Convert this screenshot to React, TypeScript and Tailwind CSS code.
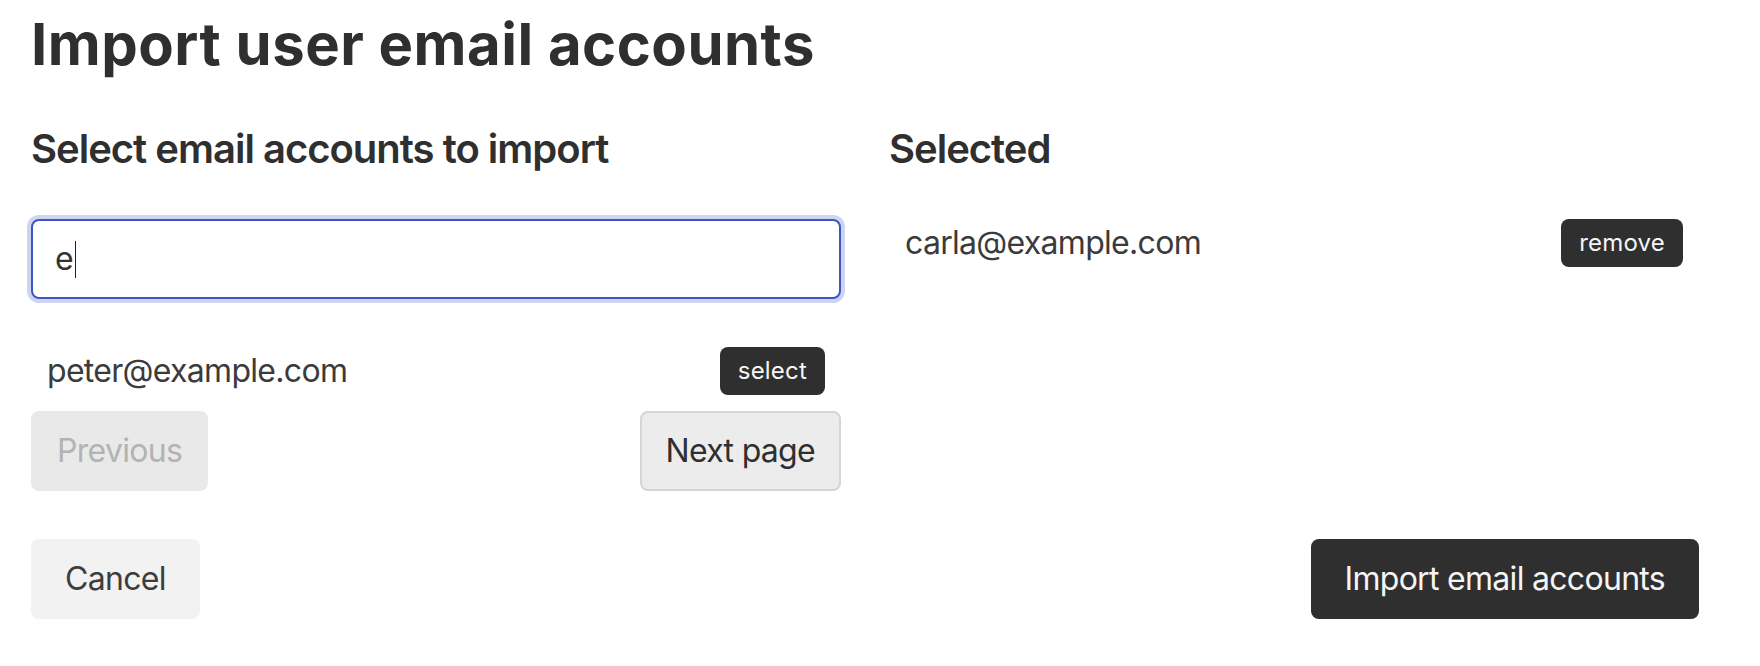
import React from 'react';

const font = { fontFamily: 'Inter, "Noto Sans", sans-serif' };

const EmailRow: React.FC<{ email: string; action: string }> = ({ email, action }) => (
  <li className="flex h-12 items-center justify-between px-4">
    <span className="text-[32px] leading-none tracking-[-0.7px] text-[#3b3b3b]">{email}</span>
    <button className="h-12 rounded-lg bg-[#2f2f2f] px-[18px] text-[24px] leading-none tracking-[0.2px] text-[#f5f5f5]">
      {action}
    </button>
  </li>
);

export default function App() {
  return (
    <div className="min-h-screen bg-white px-[31px] pt-[9px] text-[#2f2f2f]" style={font}>
      <h1 className="text-[58px] font-bold leading-[70px] tracking-[0.5px]">Import user email accounts</h1>

      <div className="mt-[46px] grid grid-cols-[810px_810px] gap-x-12">
        <section>
          <h2 className="text-[40px] font-semibold leading-[48px] tracking-[-1px]">Select email accounts to import</h2>
          <div className="mt-[46px] flex h-20 items-center rounded-lg border-2 border-[#3f55c6] bg-white pl-[22px] ring-4 ring-[#cdd5f0]">
            <span className="text-[32px] leading-none text-[#333]">e</span>
            <span className="ml-px inline-block h-[37px] w-px bg-[#222]" />
          </div>
          <ul className="mt-12">
            <EmailRow email="peter@example.com" action="select" />
          </ul>
          <div className="mt-4 flex justify-between">
            <button
              disabled
              className="h-20 rounded-lg border-2 border-[#e9e9e9] bg-[#e9e9e9] px-6 text-[32px] tracking-[-0.7px] text-[#b3b3b3]"
            >
              Previous
            </button>
            <button className="h-20 rounded-lg border-2 border-[#d5d5d5] bg-[#ececec] px-6 text-[32px] tracking-[-0.7px] text-[#2f2f2f]">
              Next page
            </button>
          </div>
        </section>

        <section>
          <h2 className="text-[40px] font-semibold leading-[48px] tracking-[-1px]">Selected</h2>
          <ul className="mt-[46px]">
            <EmailRow email="carla@example.com" action="remove" />
          </ul>
        </section>
      </div>

      <div className="mt-12 flex w-[1668px] justify-between">
        <button className="h-20 rounded-lg border-2 border-[#f2f2f2] bg-[#f2f2f2] px-8 text-[32px] tracking-[-0.7px] text-[#3d3d3d]">
          Cancel
        </button>
        <button className="h-20 rounded-lg border-2 border-[#2f2f2f] bg-[#2f2f2f] px-8 text-[32px] tracking-[-0.7px] text-[#f5f5f5]">
          Import email accounts
        </button>
      </div>
    </div>
  );
}
